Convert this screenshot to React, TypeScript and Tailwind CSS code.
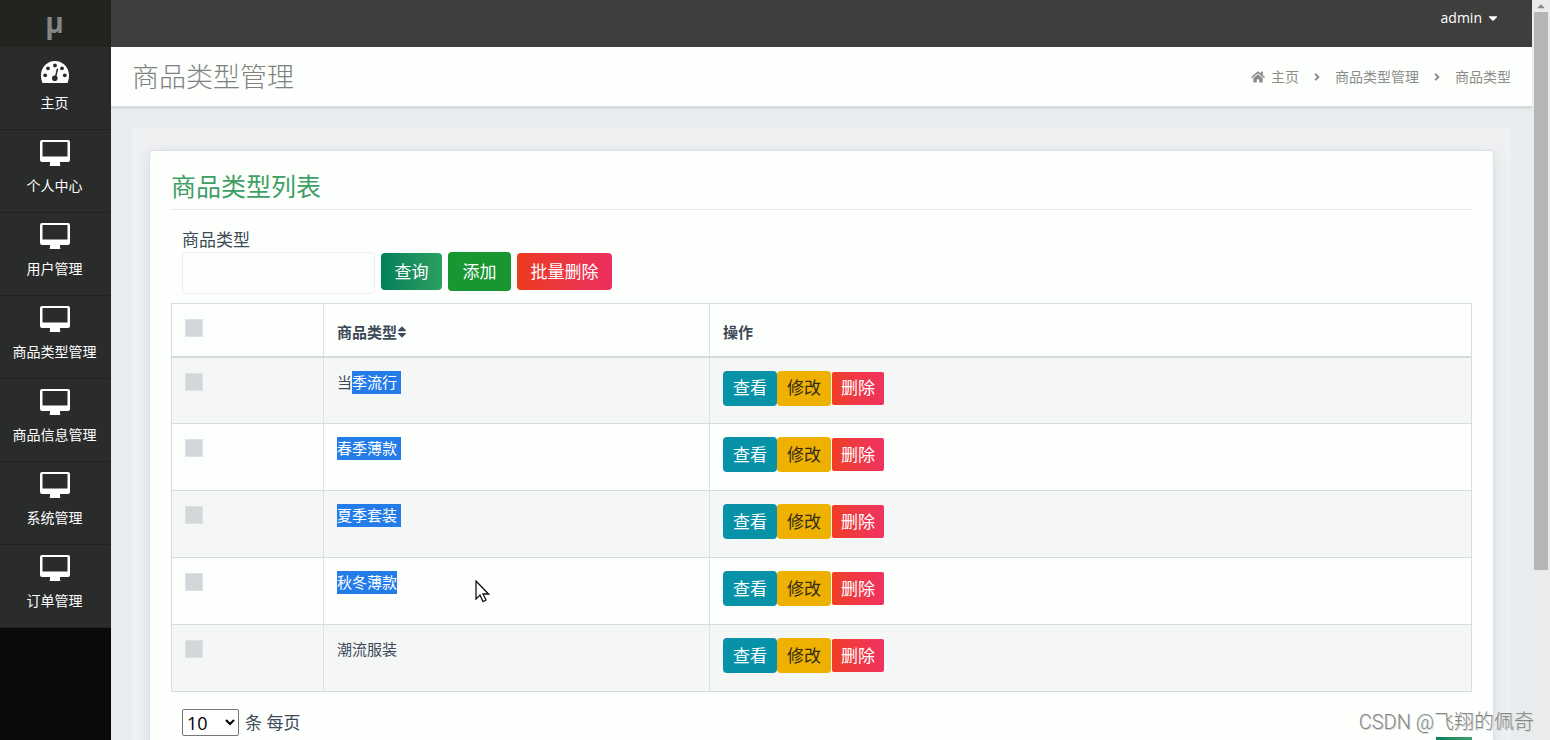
import clsx from 'clsx';
import { FaAngleRight, FaCaretDown, FaCaretUp, FaHome, FaSort } from 'react-icons/fa';

const navItems = ['个人中心', '用户管理', '商品类型管理', '商品信息管理', '系统管理', '订单管理'];

// picked = the highlighted tail of the name, pad = highlight runs past the text
const rows = [
  { plain: '当', picked: '季流行', pad: true },
  { plain: '', picked: '春季薄款', pad: true },
  { plain: '', picked: '夏季套装', pad: true },
  { plain: '', picked: '秋冬薄款', pad: false },
  { plain: '潮流服装', picked: '', pad: false },
];

function GaugeIcon() {
  return (
    <svg width="28" height="22" viewBox="0 0 28 22" fill="none" aria-hidden="true">
      <path d="M14 0C6.300 0 0 6.300 0 14c0 2.700.5 5.300 1.300 7.400.2.400.6.600 1 .6h23.400c.4 0 .8-.2 1-.6.8-2.100 1.300-4.700 1.300-7.400C28 6.300 21.700 0 14 0Z" fill="#fff" />
      <circle cx="14" cy="4.500" r="1.900" fill="#2a2b2b" />
      <circle cx="7" cy="7.300" r="1.900" fill="#2a2b2b" />
      <circle cx="21" cy="7.300" r="1.900" fill="#2a2b2b" />
      <circle cx="4.200" cy="14.300" r="1.900" fill="#2a2b2b" />
      <circle cx="23.800" cy="14.300" r="1.900" fill="#2a2b2b" />
      <path d="M16.400 8.200 14.300 17" stroke="#2a2b2b" strokeWidth="1.500" strokeLinecap="round" />
      <circle cx="13.800" cy="17.200" r="2.800" fill="#2a2b2b" />
    </svg>
  );
}

function MonitorIcon() {
  return (
    <svg width="30" height="26" viewBox="0 0 30 26" aria-hidden="true">
      <path fillRule="evenodd" d="M2 0h26a2 2 0 0 1 2 2v18a2 2 0 0 1-2 2h-8v2.500l.5 1.500h-11l.5-1.500V22H2a2 2 0 0 1-2-2V2a2 2 0 0 1 2-2Zm.500 2v14.500h25V2Z" fill="#fff" />
    </svg>
  );
}

function Sidebar() {
  return (
    <aside className="w-[111px] shrink-0 bg-[#0a0b09] text-white">
      <div className="h-[47px] flex justify-center pt-0.5 pr-0.5 bg-[#222420] text-[#858784] text-[28px] leading-10 font-bold">μ</div>
      <nav className="bg-[#2a2b2b] text-sm leading-5">
        <a href="#" className="h-[83px] flex flex-col items-center pt-3.5 pr-0.5 gap-2.5 border-b border-[#202121]">
          <GaugeIcon />
          主页
        </a>
        {navItems.map(label => (
          <a key={label} href="#" className="h-[83px] flex flex-col items-center pt-2.5 pr-0.5 gap-2.5 border-b border-[#202121]">
            <MonitorIcon />
            {label}
          </a>
        ))}
      </nav>
    </aside>
  );
}

function Checkbox({ label }: { label: string }) {
  return <input type="checkbox" aria-label={label} className="block appearance-none size-[18px] border border-[#dde1e4] bg-[#d2d7da]" />;
}

function Scrollbar() {
  return (
    <div className="w-[18px] shrink-0 flex flex-col items-center bg-[#ebecea] text-[#8b8c8a]">
      <FaCaretUp className="h-3 w-3 shrink-0" />
      <div className="h-[558px] w-3.5 bg-[#b4b6b3]" />
    </div>
  );
}

export default function App() {
  return (
    <div className="relative flex h-screen overflow-hidden bg-[#e8ecee] text-[#3d4a58]" style={{ fontFamily: '"Open Sans", "Noto Sans CJK SC", sans-serif' }}>
      <Sidebar />
      <div className="flex-1 min-w-0">
        <header className="h-[47px] flex justify-end items-start pt-2 pr-8 bg-[#3e3f3c]">
          <button className="flex items-center gap-1 text-sm leading-5 font-medium text-white">
            admin <FaCaretDown className="size-3.5" />
          </button>
        </header>

        <div className="h-[60px] flex items-center justify-between px-[21px] bg-[#fdfffd] border-b border-[#d9dcde] shadow-sm">
          <h1 className="text-[27px] leading-9 font-light text-[#808281]">商品类型管理</h1>
          <nav className="flex items-center text-sm text-[#8b8d8b]">
            <FaHome className="size-3.5 mr-1.5" />
            <a href="#">主页</a>
            <FaAngleRight className="size-3 mx-3" />
            <a href="#">商品类型管理</a>
            <FaAngleRight className="size-3 mx-3" />
            <span>商品类型</span>
          </nav>
        </div>

        <main className="mx-[21px] mt-[21px] px-[17px] pt-[22px] bg-[#eff0f1]">
          <section className="h-[640px] px-[21px] pt-[19px] rounded-sm border border-[#dcdfe5] bg-[#fdfffd] shadow-[0_4px_16px_0_#d9dce6]">
            <h2 className="h-10 text-[25px] leading-8 text-[#3f9f66] border-b border-[#e6e8e8]">商品类型列表</h2>

            <form className="flex items-end gap-1.5 px-[11px] pt-[18px] text-[17px]" onSubmit={e => e.preventDefault()}>
              <div className="flex flex-col">
                <label htmlFor="typeName" className="leading-6">商品类型</label>
                <input id="typeName" className="h-[42px] w-[193px] px-3 rounded-sm border border-[#eef0f1] bg-transparent" />
              </div>
              <button className="h-[37px] w-[61px] mb-1 rounded-sm text-white bg-linear-to-r from-[#00805a] to-[#2c9f60]">查询</button>
              <button className="h-[39px] w-[63px] mb-[3px] rounded-sm text-white bg-[#189632]">添加</button>
              <button className="h-[37px] w-[95px] mb-1 rounded-sm text-white bg-linear-to-r from-[#ec3a19] to-[#ec2f5d]">批量删除</button>
            </form>

            <table className="w-full mt-[9px] table-fixed border-collapse border border-[#d8dcdf] text-[15px]">
              <thead>
                <tr className="h-[53px] border-b-2 border-[#d5dadc] text-left">
                  <th className="w-[152px] px-[13px] pt-[15px] align-top border-r border-[#dde1e4]"><Checkbox label="全选" /></th>
                  <th className="w-[386px] px-[13px] pt-1 border-r border-[#dde1e4]">
                    <span className="flex items-center">商品类型<FaSort className="size-3.5 -ml-0.5" /></span>
                  </th>
                  <th className="px-[13px] pt-1">操作</th>
                </tr>
              </thead>
              <tbody>
                {rows.map(({ plain, picked, pad }) => (
                  <tr key={plain + picked} className="h-[67px] align-top border-b border-[#d8dcdf] odd:bg-[#f5f7f7]">
                    <td className="px-[13px] pt-[15px] border-r border-[#dde1e4]"><Checkbox label={plain + picked} /></td>
                    <td className="px-[13px] pt-[13px] leading-[23px] border-r border-[#dde1e4]">
                      {plain}
                      {picked && <mark className={clsx('inline-block bg-[#247ce8] text-white', pad && 'pr-1')}>{picked}</mark>}
                    </td>
                    <td className="px-[13px] pt-[13px]">
                      <div className="flex items-center text-[17px]">
                        <button className="h-[35px] w-[54px] rounded-sm text-white bg-[#0892a8]">查看</button>
                        <button className="h-[35px] w-[54px] rounded-sm text-[#2f2b1a] bg-[#efb100]">修改</button>
                        <button className="h-[33px] w-[52px] ml-px rounded-xs text-white bg-linear-to-r from-[#f03d22] to-[#f0325f]">删除</button>
                      </div>
                    </td>
                  </tr>
                ))}
              </tbody>
            </table>

            <div className="flex items-start justify-between pl-[11px] pt-[17px]">
              <label className="flex items-center gap-1.5 text-[17px]">
                <select className="h-[27px] w-[57px] rounded-xs border border-[#777] bg-white text-lg leading-6 text-black">
                  <option>10</option>
                </select>
                条 每页
              </label>
              <button aria-label="1" className="mt-7 h-9 w-9 bg-linear-to-r from-[#00805a] to-[#3fa26d]" />
            </div>
          </section>
        </main>
      </div>
      <Scrollbar />

      {/* Pointer */}
      <svg className="absolute left-[475px] top-[580px]" width="15" height="23" viewBox="0 0 15 23" aria-hidden="true">
        <path d="M1 1v18l4-4 3 6.500 3-1.500-3-6h5.500Z" fill="#fff" stroke="#111" strokeWidth="1.300" />
      </svg>

      {/* Watermark */}
      <p className="absolute right-4 bottom-1 text-xl leading-7 font-light text-[#858786] [text-shadow:1px_1px_0_#d4d6d5]" style={{ fontFamily: 'Roboto, "Noto Sans CJK SC", sans-serif' }}>CSDN @飞翔的佩奇</p>
    </div>
  );
}
